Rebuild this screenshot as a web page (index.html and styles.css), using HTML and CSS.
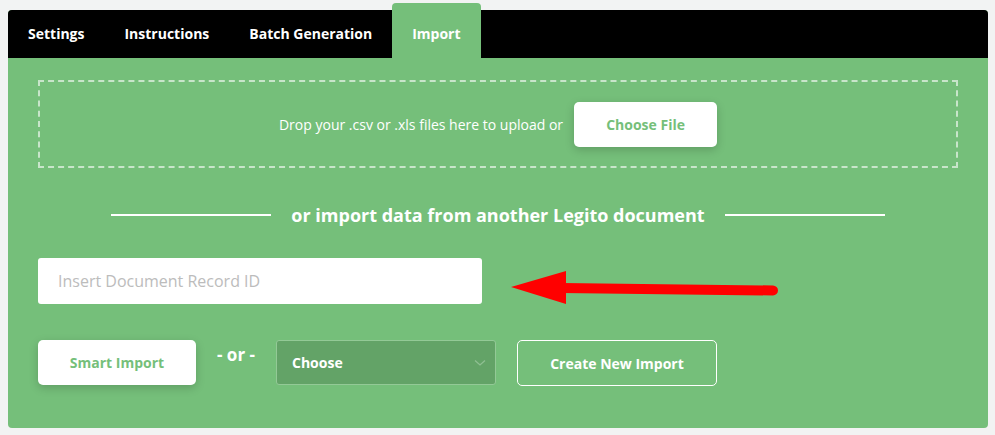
FILE: index.html
```html
<!DOCTYPE html>
<html>
  <head>
    <link rel="stylesheet" href="styles.css">
  </head>
  <body>
    <div class="panel">
      <div class="tabs">
        <div class="tab">Settings</div>
        <div class="tab">Instructions</div>
        <div class="tab">Batch Generation</div>
        <div class="tab active">Import</div>
      </div>

      <div class="content">
        <div class="dropzone">
          <span>Drop your .csv or .xls files here to upload or</span>
          <button class="btn-white choose">Choose File</button>
        </div>

        <div class="divider">
          <span class="line"></span>
          <span class="divider-text">or import data from another Legito document</span>
          <span class="line"></span>
        </div>

        <div class="record-row">
          <input class="record-input" type="text" placeholder="Insert Document Record ID">
          <svg class="arrow" width="270" height="40" viewBox="0 0 270 40">
            <line x1="50" y1="18" x2="262" y2="20.5" stroke="#ff0000" stroke-width="10" stroke-linecap="round"/>
            <polygon points="0,17 55,1 55,34" fill="#ff0000"/>
          </svg>
        </div>

        <div class="actions">
          <button class="btn-white smart">Smart Import</button>
          <span class="or">- or -</span>
          <div class="select">
            <span>Choose</span>
            <svg width="12" height="8" viewBox="0 0 12 8"><path d="M1 1.5 L6 6 L11 1.5" fill="none" stroke="#8fbf92" stroke-width="1.3"/></svg>
          </div>
          <button class="btn-outline">Create New Import</button>
        </div>
      </div>
    </div>
  </body>
</html>
```

FILE: styles.css
```css
body {
  margin: 0;
  padding: 10px 7px 0 8px;
  background-color: #f2f3f3;
  font-family: "Open Sans", sans-serif;
  color: white;
}
button {
  font-family: "Open Sans", sans-serif;
  cursor: pointer;
}
.panel {
  background-color: #75bf7a;
  border-radius: 4px;
  height: 418px;
}
.tabs {
  display: flex;
  background-color: black;
  height: 48px;
  border-radius: 4px 4px 0 0;
}
.tab {
  padding: 0 20px;
  height: 48px;
  line-height: 48px;
  font-size: 14px;
  font-weight: bold;
}
.tab.active {
  background-color: #75bf7a;
  margin-top: -7px;
  height: 55px;
  line-height: 62px;
  border-radius: 4px 4px 0 0;
}
.content {
  padding: 22px 30px;
}
.dropzone {
  border: 2px dashed rgba(255, 255, 255, 0.6);
  height: 84px;
  display: flex;
  align-items: center;
  justify-content: center;
  font-size: 14px;
  gap: 11px;
}
.btn-white {
  background-color: white;
  border: none;
  border-radius: 5px;
  color: #75bf7a;
  font-size: 14px;
  font-weight: bold;
  box-shadow: 0 3px 10px rgba(0, 0, 0, 0.18);
}
.choose {
  width: 143px;
  height: 45px;
}
.divider {
  display: flex;
  align-items: center;
  justify-content: center;
  gap: 20px;
  margin-top: 34px;
  height: 26px;
}
.line {
  width: 160px;
  height: 2px;
  background-color: white;
}
.divider-text {
  font-size: 18px;
  font-weight: bold;
}
.record-row {
  display: flex;
  align-items: center;
  margin-top: 24px;
  gap: 29px;
}
.record-input {
  width: 444px;
  height: 46px;
  box-sizing: border-box;
  border: none;
  border-radius: 3px;
  padding: 0 20px;
  font-family: "Open Sans", sans-serif;
  font-size: 16px;
  outline: none;
}
.record-input::placeholder {
  color: #bcbcbc;
}
.arrow {
  margin-top: 18px;
}
.actions {
  display: flex;
  align-items: flex-start;
  margin-top: 30px;
}
.smart {
  width: 158px;
  height: 45px;
}
.or {
  font-size: 17px;
  font-weight: bold;
  margin: 3px 20px 0 20px;
  width: 40px;
  text-align: center;
}
.select {
  width: 220px;
  height: 45px;
  box-sizing: border-box;
  background-color: #63a367;
  border: 1px solid #93c996;
  border-radius: 3px;
  display: flex;
  align-items: center;
  justify-content: space-between;
  padding: 0 9px 0 15px;
  font-size: 14px;
  font-weight: bold;
}
.btn-outline {
  margin-left: 21px;
  width: 200px;
  height: 46px;
  background: transparent;
  border: 1px solid white;
  border-radius: 5px;
  color: white;
  font-size: 14px;
  font-weight: bold;
}
```
